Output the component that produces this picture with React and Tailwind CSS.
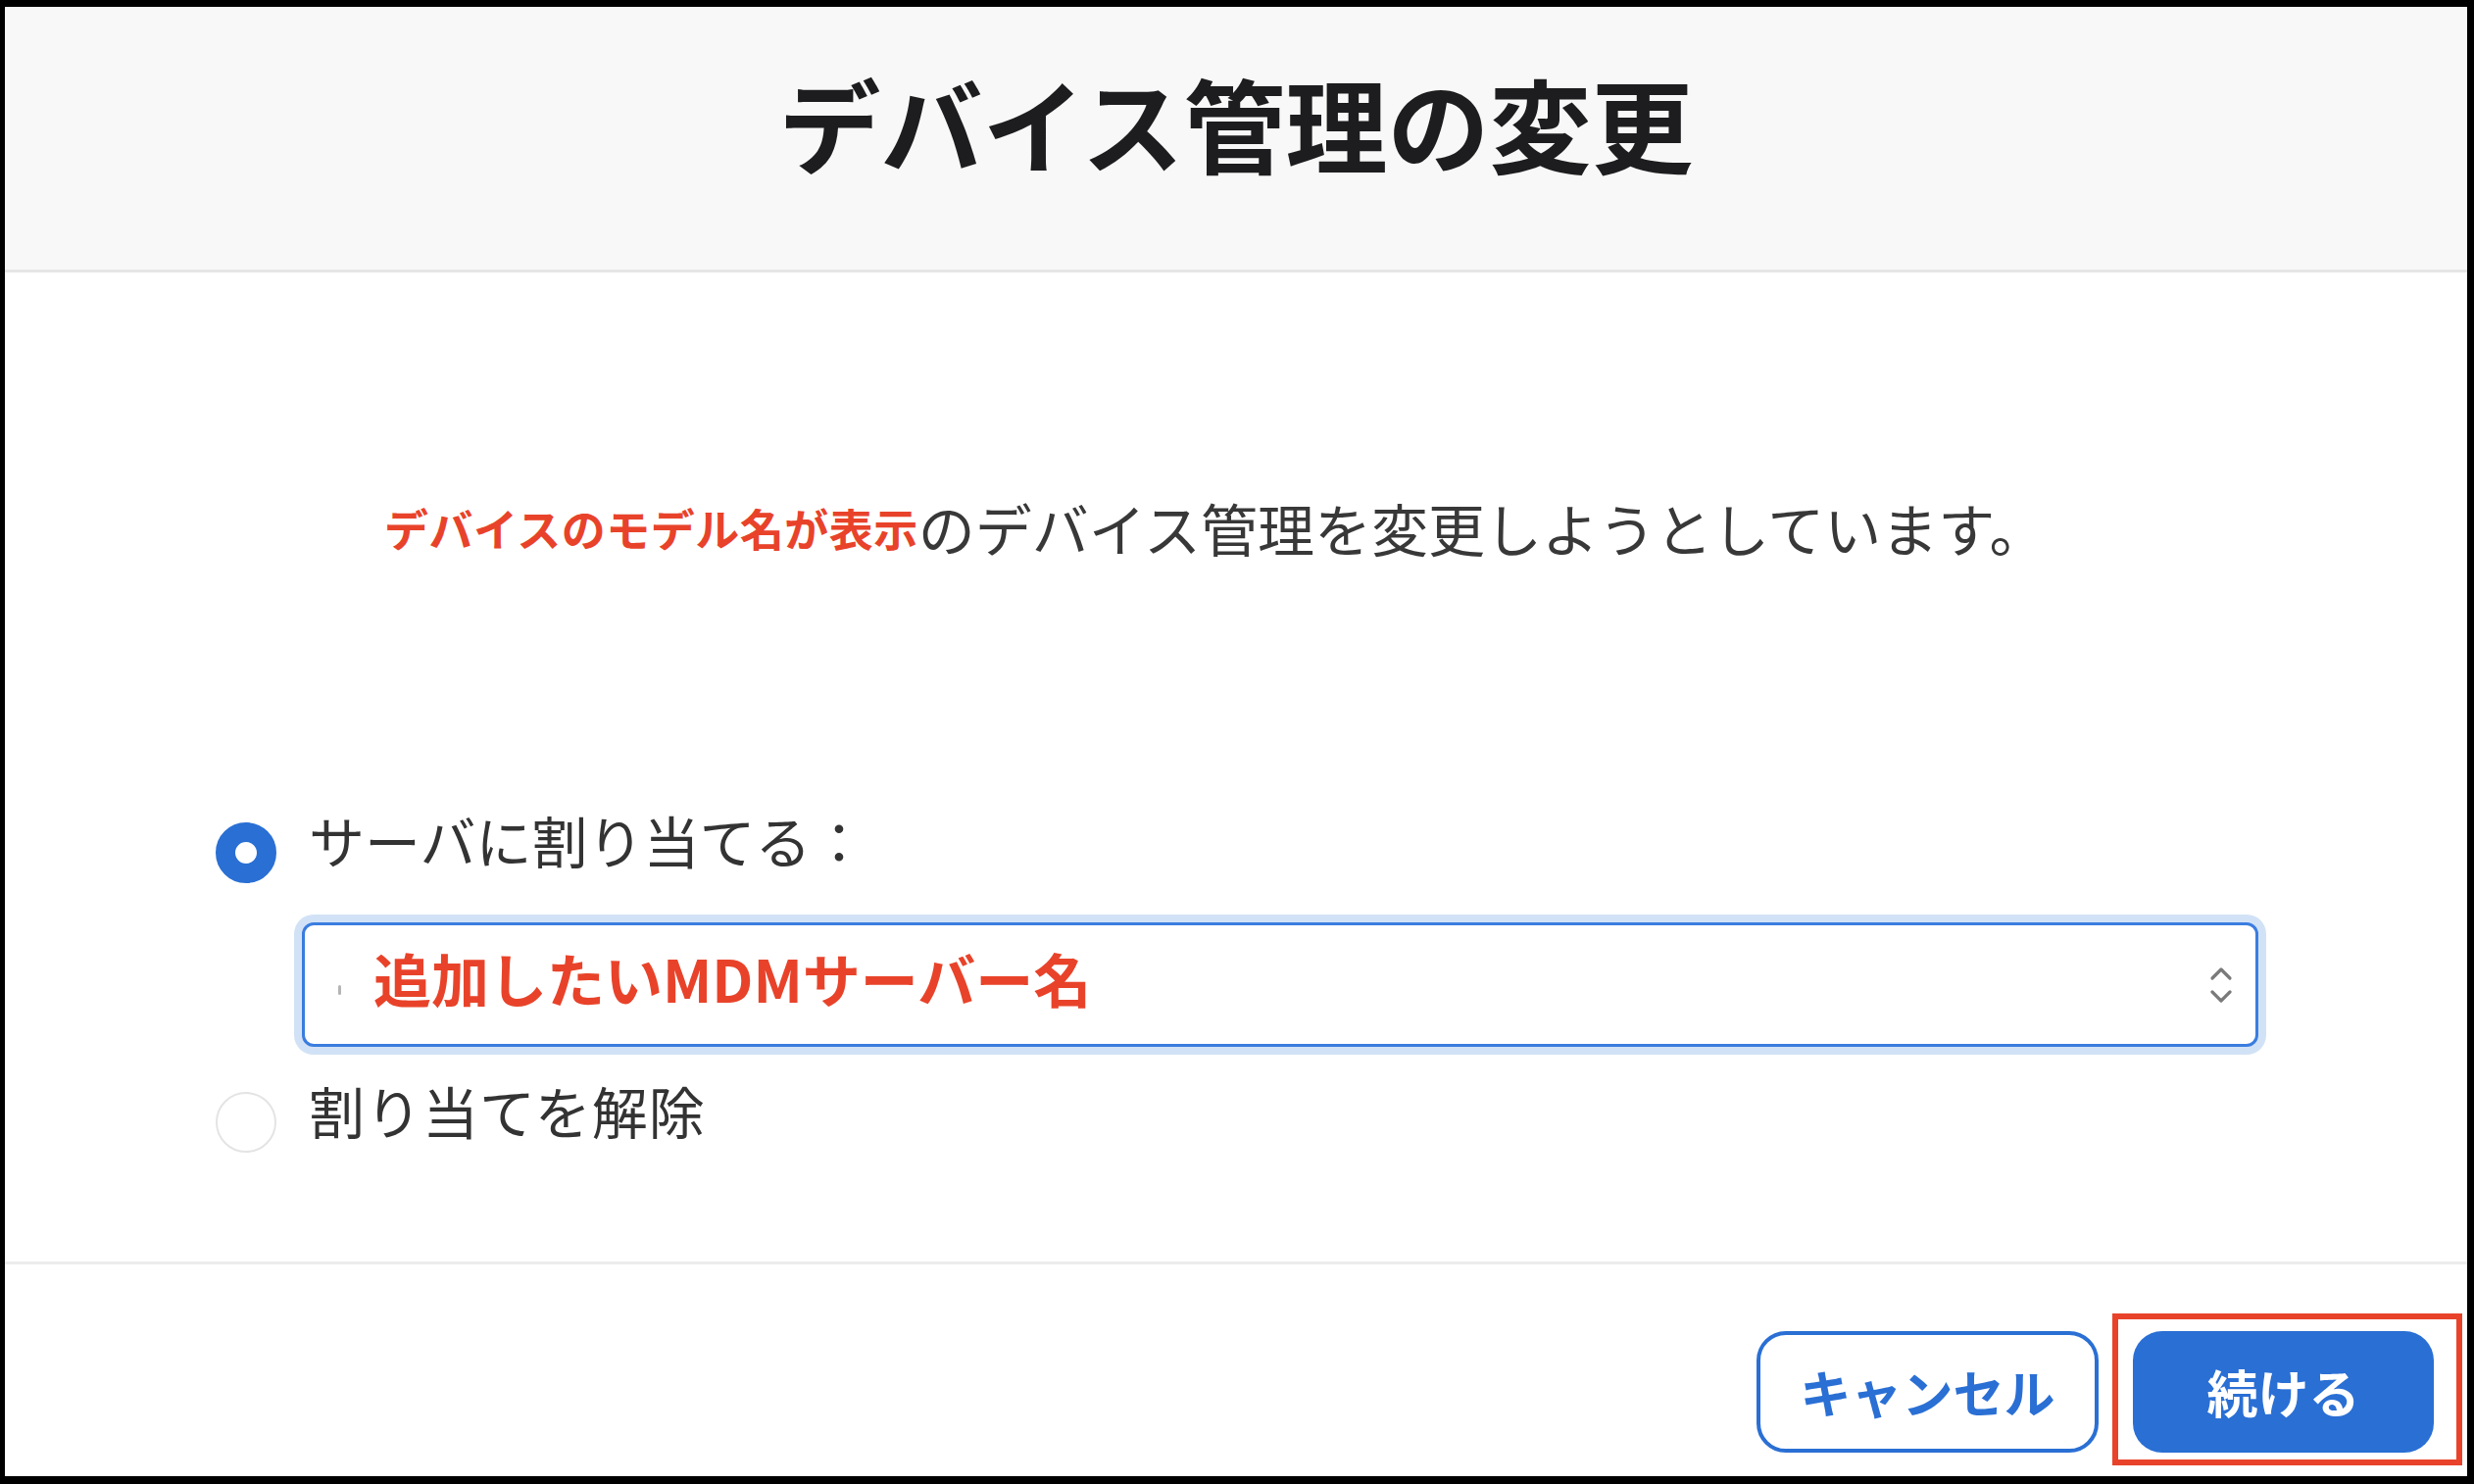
import React from "react";

export default function App() {
  return (
    <div className="w-[2524px] h-[1514px] bg-black pt-[7px] pl-[5px] pr-[7px] pb-[8px] font-['Noto_Sans_CJK_JP','Noto_Sans',sans-serif]">
      <div className="relative flex flex-col h-full bg-white">
        {/* Header */}
        <div className="h-[271px] shrink-0 bg-[#f8f8f8] border-b-[3px] border-[#e6e6e6] flex justify-center pt-[66px]">
          <h1 className="text-[104px] leading-none font-bold text-[#1d1d1f]">デバイス管理の変更</h1>
        </div>

        {/* Body */}
        <div className="flex-1 flex flex-col">
          <div className="mt-[231px] pl-[387px] flex items-center">
            <span className="text-[45px] tracking-[0.5px] leading-none font-bold text-[#e8432a]">デバイスのモデル名が表示</span>
            <span className="text-[58px] leading-none text-[#383838]">のデバイス管理を変更しようとしています。</span>
          </div>

          <div className="mt-[261px] pl-[215px] flex flex-col">
            <div className="flex items-start gap-[33px]">
              <div className="mt-[11px] w-[62px] h-[62px] rounded-full border-[20px] border-[#2a6fd4] bg-white shrink-0" />
              <span className="text-[57px] leading-none text-[#333333]">サーバに割り当てる：</span>
            </div>

            <div className="mt-[40px] ml-[88px] w-[1996px] h-[127px] border-[3px] border-[#3a7ddf] rounded-[12px] shadow-[0_0_0_8px_#d2e2f6] flex items-center pl-[34px] pr-[23px] bg-white">
              <span className="w-[3px] h-[10px] rounded-full bg-[#b5b5b5] mt-[10px]" />
              <span className="ml-[33px] mb-[14px] text-[59px] leading-none font-bold text-[#e8432a]">追加したいMDMサーバー名</span>
              <svg className="ml-auto" width="24" height="40" viewBox="0 0 24 40" fill="none" stroke="#7a7a7a" strokeWidth="3.2" strokeLinecap="round" strokeLinejoin="round">
                <polyline points="3,13 12,4 21,13" />
                <polyline points="3,27 12,36 21,27" />
              </svg>
            </div>

            <div className="mt-[36px] flex items-start gap-[33px]">
              <div className="mt-[10px] w-[62px] h-[62px] rounded-full border-[2px] border-[#e4e4e4] bg-white shrink-0" />
              <span className="text-[57px] tracking-[1px] leading-none text-[#333333]">割り当てを解除</span>
            </div>
          </div>
        </div>

        {/* Footer */}
        <div className="h-[219px] shrink-0 border-t-[3px] border-[#ececec] flex justify-end items-start pt-[68px] pr-[34px] gap-[35px]">
          <button className="w-[349px] h-[124px] rounded-[30px] border-[4px] border-[#2a6fd4] bg-white text-[#2a6fd4] text-[52px] leading-none font-bold flex items-center justify-center">
            キャンセル
          </button>
          <button className="w-[307px] h-[124px] rounded-[30px] bg-[#2a6fd4] text-white text-[52px] leading-none font-bold flex items-center justify-center">
            続ける
          </button>
        </div>

        {/* Annotation box */}
        <div className="absolute left-[2150px] top-[1333px] w-[357px] h-[155px] border-[6px] border-[#e8432a] pointer-events-none" />
      </div>
    </div>
  );
}
